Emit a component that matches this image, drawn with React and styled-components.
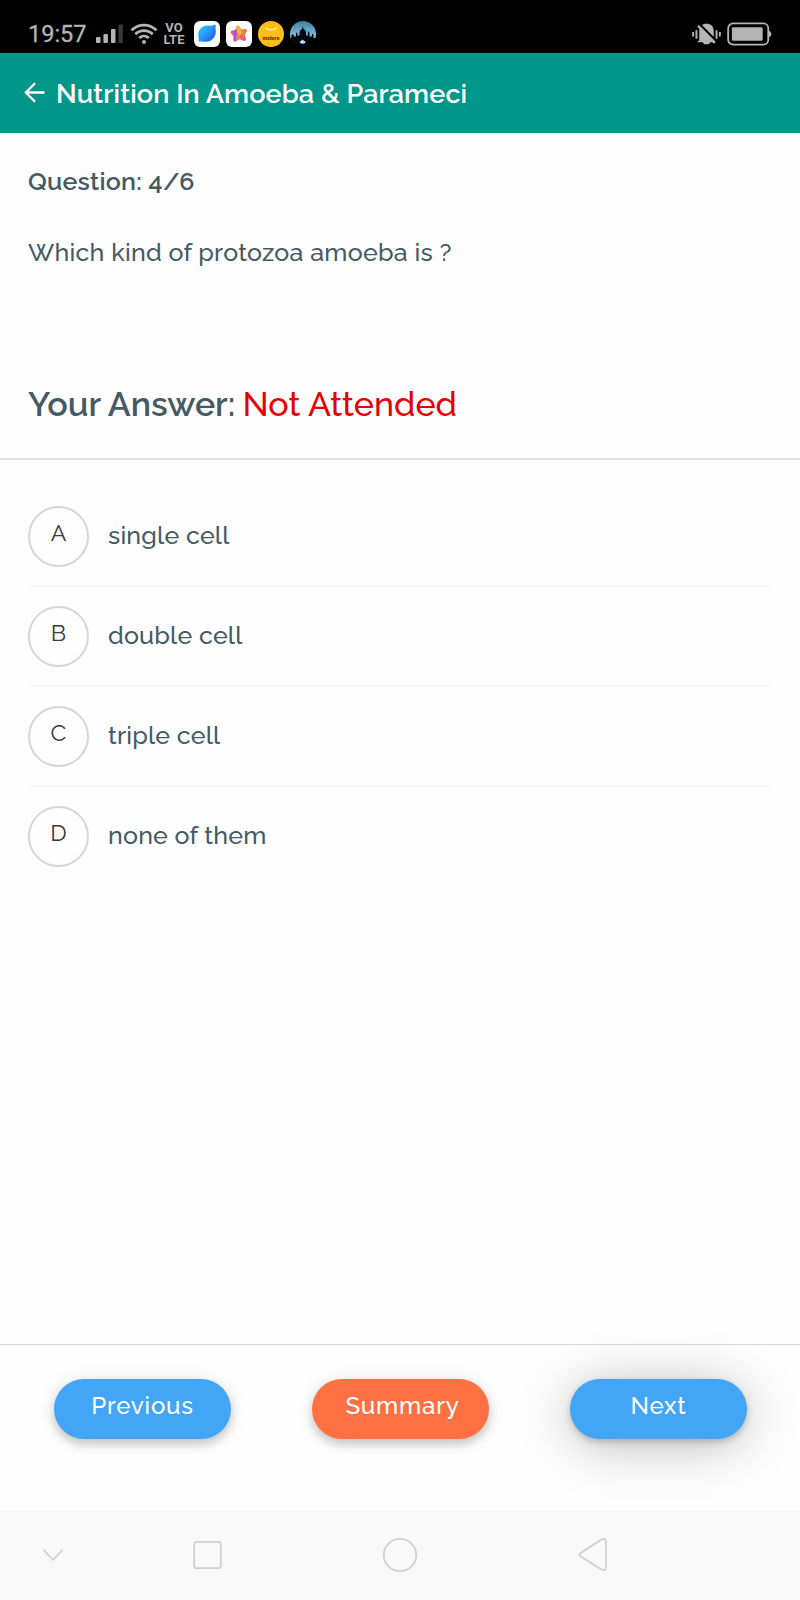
import styled, { createGlobalStyle } from 'styled-components';

const TEAL = '#009688';
const BLUE = '#42A5F5';
const ORANGE = '#FF7043';
const TEXT = '#455A64';
const RED = '#E60000';
const BORDER = '#DADADA';
const STATUS = '#B4B4B4';

const GlobalStyle = createGlobalStyle`
  * {
    box-sizing: border-box;
  }

  body {
    margin: 0;
    background: #fefefe;
    font-family: 'Raleway', 'Lato', sans-serif;
    color: ${TEXT};
  }
`;

const Screen = styled.div`
  display: flex;
  flex-direction: column;
  width: 800px;
  height: 1600px;
  background: #fefefe;
  overflow: hidden;
`;

const StatusBar = styled.div`
  display: flex;
  align-items: center;
  justify-content: space-between;
  height: 53px;
  padding: 15px 28px 0;
  background: #000;
`;

const StatusGroup = styled.div`
  display: flex;
  align-items: center;

  svg {
    display: block;
  }
`;

const Clock = styled.span`
  width: 67px;
  font-family: 'Roboto', sans-serif;
  font-size: 23.5px;
  line-height: 38px;
  color: ${STATUS};
  -webkit-text-stroke: 0.3px ${STATUS};
  white-space: nowrap;
`;

const Volte = styled.div`
  display: flex;
  flex-direction: column;
  width: 30px;
  font-family: 'Roboto', sans-serif;
  font-size: 13px;
  font-weight: 700;
  line-height: 12px;
  text-align: center;
  color: ${STATUS};
`;

const AppIcons = styled.div`
  display: flex;
  gap: 6px;
  margin-left: 5px;
`;

const Header = styled.header`
  display: flex;
  align-items: center;
  height: 80px;
  padding: 0 24px;
  background: ${TEAL};
  color: #fff;
`;

const Title = styled.h1`
  margin: 2px 0 0 10px;
  font-size: 27px;
  font-weight: 600;
  line-height: 36px;
  letter-spacing: 0.1px;
  white-space: nowrap;
`;

const QuestionPanel = styled.section`
  height: 327px;
  padding: 32px 28px 0;
  border-bottom: 2px solid #e2e2e2;
`;

const QuestionCount = styled.div`
  font-size: 25px;
  font-weight: 600;
  line-height: 32px;
  letter-spacing: 0.25px;
`;

const QuestionText = styled.p`
  margin: 39px 0 0;
  font-size: 25px;
  font-weight: 500;
  line-height: 32px;
  letter-spacing: 0.25px;
`;

const AnswerLine = styled.div`
  display: flex;
  gap: 7px;
  margin-top: 115px;
  font-size: 34px;
  line-height: 42px;
  white-space: nowrap;
`;

const AnswerLabel = styled.span`
  font-weight: 600;
`;

const AnswerValue = styled.span`
  font-weight: 500;
  color: ${RED};
`;

const OptionList = styled.ul`
  flex: 1;
  margin: 0;
  padding: 27.5px 28px 0;
  list-style: none;
`;

const Option = styled.li`
  display: flex;
  align-items: center;
  gap: 19px;
  height: 99.9px;
  border-bottom: 2px solid #f7f7f7;

  &:last-child {
    border-bottom-color: transparent;
  }
`;

const Letter = styled.span`
  display: flex;
  justify-content: center;
  width: 61px;
  height: 61px;
  padding-top: 10px;
  border: 2px solid #d6d6d6;
  border-radius: 50%;
  font-size: 23px;
  line-height: 30px;
  color: #3a3a3a;
`;

const OptionText = styled.span`
  margin-top: -3px;
  font-size: 25px;
  font-weight: 500;
  line-height: 32px;
  letter-spacing: 0.2px;
`;

const Actions = styled.div`
  display: flex;
  justify-content: space-between;
  height: 166px;
  padding: 34px 53px 0 54px;
  border-top: 1px solid ${BORDER};
`;

const ActionButton = styled.button`
  width: 177px;
  height: 60px;
  padding: 0 0 6px ${({ $shift }) => $shift || '0'};
  border: none;
  border-radius: 30px;
  background: ${({ $color }) => $color};
  box-shadow: ${({ $raised }) =>
    $raised
      ? '0 3px 6px rgba(0, 0, 0, 0.2), 0 6px 52px rgba(0, 0, 0, 0.27)'
      : '0 5px 10px rgba(0, 0, 0, 0.18), 0 2px 18px rgba(0, 0, 0, 0.1)'};
  font-family: inherit;
  font-size: 24px;
  font-weight: 500;
  line-height: 30px;
  letter-spacing: 0.8px;
  color: #fff;
  cursor: pointer;
`;

const NavBar = styled.nav`
  height: 90px;
  background: #f8f8f8;

  svg {
    display: block;
  }
`;

const SignalIcon = () => (
    <svg width="28" height="20" viewBox="0 0 28 20" fill={STATUS}>
        <rect x="1" y="13" width="4.5" height="6" rx="1" />
        <rect x="8.4" y="10" width="4.5" height="9" rx="1" />
        <rect x="16" y="5" width="4.5" height="14" rx="1" />
        <rect x="23.5" y="0.5" width="4.3" height="18.5" rx="0.5" fill="#393939" />
    </svg>
);

const WifiIcon = () => (
    <svg width="36" height="22" viewBox="0 0 36 22" fill="none" stroke={STATUS} strokeWidth="2.8">
        <path d="M8.5 7.2C15.5 0.3 26.5 0.3 33.5 7.2" />
        <path d="M12.3 11.2C17.2 6.4 24.8 6.4 29.7 11.2" />
        <path d="M16.2 15.1C19 12.4 23 12.4 25.8 15.1" />
        <circle cx="21" cy="19" r="2" fill={STATUS} stroke="none" />
    </svg>
);

const BrowserIcon = () => (
    <svg width="26" height="26" viewBox="0 0 26 26">
        <defs>
            <linearGradient id="leaf" x1="0" y1="0" x2="1" y2="1">
                <stop offset="0" stopColor="#2bd0ef" />
                <stop offset="0.5" stopColor="#2b95f2" />
                <stop offset="1" stopColor="#2369e8" />
            </linearGradient>
        </defs>
        <rect width="26" height="26" rx="6" fill="#fbfdff" />
        <path d="M21.5 3.5C22 5 21.7 6 21.4 7.4C23.5 14 18.5 21.2 11 20.8C8 20.4 6.8 20.5 4.5 20.8C4.8 18.8 5 17.8 4.6 16.2C2.8 9.4 8.1 3.9 15 4.7C17.5 5.1 19 4 21.5 3.5Z" fill="url(#leaf)" />
        <path d="M19.5 5.5C20.2 12 15.5 18 7 20.4C15 21.6 21.5 18 21.5 7.5Z" fill="#1f63d8" opacity="0.35" />
    </svg>
);

const PhotosIcon = () => (
    <svg width="26" height="26" viewBox="0 0 26 26">
        <defs>
            <linearGradient id="petals" x1="0" y1="0.4" x2="1" y2="0.6">
                <stop offset="0" stopColor="#e85a78" />
                <stop offset="0.25" stopColor="#a04ee0" />
                <stop offset="0.5" stopColor="#f08a50" />
                <stop offset="1" stopColor="#f5703c" />
            </linearGradient>
        </defs>
        <rect width="26" height="26" rx="6" fill="#fffefd" />
        <path d="M12 6.5L14.4 10.2L19.3 9.7L17 13.6L18.3 18.2L13.4 16.6L9 19L9.2 14.6L6.3 11.3L10.4 10.4Z" fill="url(#petals)" stroke="url(#petals)" strokeWidth="3.4" strokeLinejoin="round" />
        <path d="M12 6.8L13.4 11.5" stroke="#ffb52b" strokeWidth="4" strokeLinecap="round" />
        <path d="M15.5 15.5L18 18" stroke="#ea5794" strokeWidth="3.4" strokeLinecap="round" />
    </svg>
);

const StoreIcon = () => (
    <svg width="26" height="26" viewBox="0 0 26 26">
        <circle cx="13" cy="13" r="13" fill="#fdbf14" />
        <path d="M7.5 6.5C8.3 9.4 17.8 9.4 18.6 6.5" fill="none" stroke="#fff0a6" strokeWidth="1.3" />
        <text x="13" y="19.3" textAnchor="middle" fontFamily="Roboto, sans-serif" fontSize="6" fontWeight="900" textLength="17" lengthAdjust="spacingAndGlyphs" fill="#59400e">mstore</text>
    </svg>
);

const CastleIcon = () => (
    <svg width="26" height="26" viewBox="0.5 0 26 26">
        <defs>
            <clipPath id="disc"><circle cx="13.5" cy="13" r="13" /></clipPath>
            <linearGradient id="dusk" x1="0" y1="0" x2="0" y2="1">
                <stop offset="0" stopColor="#3e7d9e" />
                <stop offset="1" stopColor="#8bd0e8" />
            </linearGradient>
        </defs>
        <g clipPath="url(#disc)">
            <rect width="27" height="18" fill="url(#dusk)" />
            <path d="M0 26V17L2 16.5V14.5L3.2 13L4.4 14.5V15.5H6.4V13L7.2 11L8 13V14.5H10V11.5Q10 9 12.6 8L13.3 5L14 8Q16.6 9 16.6 11.5V14.5H18.4V12L19.2 10L20 12V15.5H22.3V14L23.2 12.5L24.1 14V17H27V26Z" fill="#02070b" />
            <path d="M10.2 21.5Q10.8 19.5 12.2 19.5Q13 17.5 14 19.5Q15.6 19.6 16 21.8Q13.2 24 10.2 21.5Z" fill="#b5e2f2" />
        </g>
    </svg>
);

const MutedBellIcon = () => (
    <svg width="29" height="24" viewBox="0 0 30 24">
        <path d="M7.5 19V9C7.5 4 10.7 1.5 15 1.5S22.5 4 22.5 9V16.3L24 19V20.5H19L17.5 22.5H12.5L11 20.5H6V19Z" fill={STATUS} />
        <path d="M8.5 2.5L24.5 18.5" stroke="#000" strokeWidth="2.2" />
        <path d="M6.2 3.5L23.5 21.3" stroke={STATUS} strokeWidth="2.4" />
        <path d="M1.2 10V14.5M4.6 8V17M25.4 8V17M28.8 10V14.5" stroke={STATUS} strokeWidth="2" />
    </svg>
);

const BatteryIcon = () => (
    <svg width="45" height="24" viewBox="0 0 46 24">
        <rect x="1.2" y="1.2" width="41" height="21.6" rx="5" fill="none" stroke={STATUS} strokeWidth="1.9" />
        <rect x="5" y="5" width="31.5" height="14" rx="1.5" fill={STATUS} />
        <path d="M42.5 8.5Q45.5 9.8 45.5 12T42.5 15.5Z" fill={STATUS} />
    </svg>
);

const BackIcon = () => (
    <svg width="22" height="22" viewBox="0 0 22 22" fill="none" stroke="#fff" strokeWidth="2.3">
        <path d="M11 1.3L1.9 10.5L11 19.8M2 10.5H20.5" />
    </svg>
);

const options = [
    { letter: 'A', text: 'single cell' },
    { letter: 'B', text: 'double cell' },
    { letter: 'C', text: 'triple cell' },
    { letter: 'D', text: 'none of them' },
];

const App = () => {
    return (
        <>
            <GlobalStyle />
            <Screen>
                <StatusBar>
                    <StatusGroup>
                        <Clock>19:57</Clock>
                        <SignalIcon />
                        <WifiIcon />
                        <Volte>
                            <span>VO</span>
                            <span>LTE</span>
                        </Volte>
                        <AppIcons>
                            <BrowserIcon />
                            <PhotosIcon />
                            <StoreIcon />
                            <CastleIcon />
                        </AppIcons>
                    </StatusGroup>
                    <StatusGroup>
                        <MutedBellIcon />
                        <svg width="6" height="1" />
                        <BatteryIcon />
                    </StatusGroup>
                </StatusBar>

                <Header>
                    <BackIcon />
                    <Title>Nutrition In Amoeba &amp; Parameci</Title>
                </Header>

                <QuestionPanel>
                    <QuestionCount>Question: 4/6</QuestionCount>
                    <QuestionText>Which kind of protozoa amoeba is ?</QuestionText>
                    <AnswerLine>
                        <AnswerLabel>Your Answer:</AnswerLabel>
                        <AnswerValue>Not Attended</AnswerValue>
                    </AnswerLine>
                </QuestionPanel>

                <OptionList>
                    {options.map(({ letter, text }) => (
                        <Option key={letter}>
                            <Letter>{letter}</Letter>
                            <OptionText>{text}</OptionText>
                        </Option>
                    ))}
                </OptionList>

                <Actions>
                    <ActionButton $color={BLUE}>Previous</ActionButton>
                    <ActionButton $color={ORANGE} $shift="4px">Summary</ActionButton>
                    <ActionButton $color={BLUE} $raised>Next</ActionButton>
                </Actions>

                <NavBar>
                    <svg width="800" height="90" viewBox="0 0 800 90" fill="none" stroke="#cfcfcf" strokeWidth="1.8" strokeLinejoin="round">
                        <path d="M43.3 39.5L53 50L62.7 39.5" />
                        <rect x="194.2" y="31.8" width="26.6" height="26.4" rx="2.5" />
                        <circle cx="400" cy="45" r="16.2" />
                        <path d="M580.3 43.2L601.5 29.6Q605.8 27.6 606 31.5V57.5Q605.8 61.4 601.5 59.4L580.3 46.2Q578.3 44.7 580.3 43.2Z" />
                    </svg>
                </NavBar>
            </Screen>
        </>
    );
};

export default App;
